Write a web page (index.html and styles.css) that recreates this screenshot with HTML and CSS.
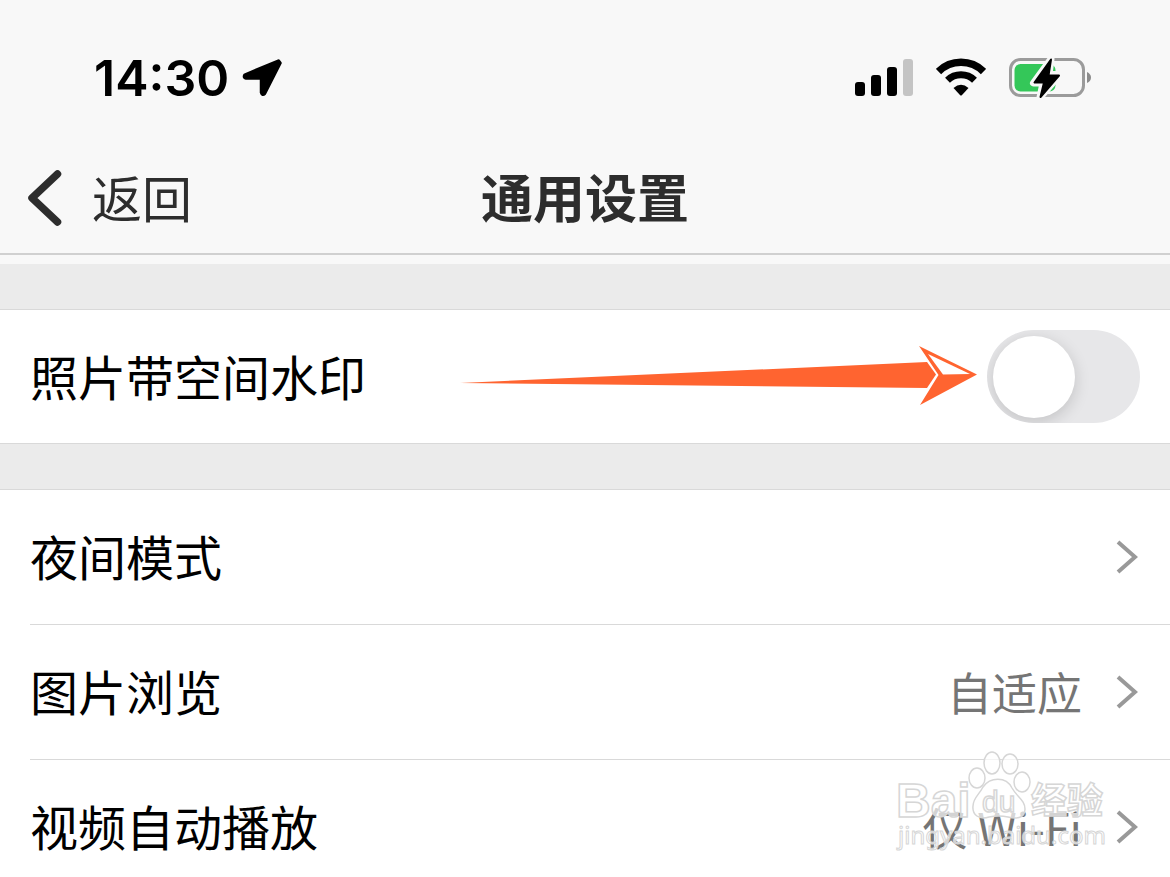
FILE: index.html
```
<!DOCTYPE html>
<html lang="zh-Hans">
<head>
  <meta charset="UTF-8" />
  <meta name="viewport" content="width=device-width, initial-scale=1" />
  <title>通用设置</title>
  <link rel="stylesheet" href="styles.css">
</head>
<body>
  <div class="screen">
    <header class="header">
      <div class="status-bar">
        <div class="status-left">
          <span class="time">14:30</span>
          <svg width="42" height="42" viewBox="0 0 42 42" aria-hidden="true">
            <path d="M37.500 4L4 18Q2.500 20.500 5 21H20.500V35.500Q21.500 38.500 23.500 36.500L39 6Z" stroke="#000" stroke-width="3.500" stroke-linejoin="round" />
          </svg>
        </div>
        <div class="status-right">
          <svg width="58" height="40" viewBox="0 0 58 40" aria-hidden="true">
            <rect x="0" y="24" width="10" height="14" rx="3" />
            <rect x="16" y="17" width="10" height="21" rx="3" />
            <rect x="32" y="9" width="10" height="29" rx="3" />
            <rect x="48" y="1" width="10" height="37" rx="3" fill="#c4c4c4" />
          </svg>
          <svg width="50" height="40" viewBox="0 0 50 40" aria-hidden="true">
            <path d="M2.500 13.500A32 32 0 0 1 47.500 13.500" fill="none" stroke="#000" stroke-width="7.500" />
            <path d="M11.500 22.200A19.500 19.500 0 0 1 38.500 22.200" fill="none" stroke="#000" stroke-width="7" />
            <path d="M17.500 30Q25 23.500 32.500 30L25.800 37.200Q25 38 24.200 37.200Z" />
          </svg>
          <svg width="83" height="44" viewBox="0 0 83 44" aria-hidden="true">
            <rect x="1.500" y="3.500" width="73" height="36" rx="10" fill="none" stroke="#9b9b9b" stroke-width="3" />
            <path d="M78 16Q82 18 82 21.500Q82 25 78 27Z" fill="#8c8c8c" />
            <rect x="5.500" y="8" width="41" height="27.500" rx="6" fill="#34c759" />
            <path d="M42 3L24.500 27H34L31 41.500L51 18.500H40Z" fill="#000" stroke="#f8f8f8" stroke-width="7" stroke-linejoin="round" />
            <path d="M42 3.500L25.500 26.500H35L31.500 41L50 19.500H39.500Z" stroke="#000" stroke-width="2" stroke-linejoin="round" />
          </svg>
        </div>
      </div>
      <nav class="nav-bar">
        <a class="back" href="#">
          <svg width="34" height="58" viewBox="0 0 34 58" aria-hidden="true">
            <path d="M29.500 5L4 29L29.500 53" fill="none" stroke="#2d2d2d" stroke-width="7.500" stroke-linecap="round" stroke-linejoin="round" />
          </svg>
          <span class="text">返回</span>
        </a>
        <h1 class="text">通用设置</h1>
      </nav>
    </header>

    <main>
      <section class="group">
        <div class="row">
          <label class="text" for="watermark">照片带空间水印</label>
          <svg class="pointer" width="520" height="64" viewBox="0 0 520 64" aria-hidden="true">
            <path d="M1 38L468 17L477 29.500L468 43Z" fill="#ff6430" />
            <path d="M460 1L518 29.500L461 60L479.500 30Z" fill="#ff6430" />
            <path d="M469 9L511 29L484 29.500Z" fill="#fff" />
          </svg>
          <input class="switch" type="checkbox" id="watermark" role="switch" />
        </div>
      </section>

      <section class="group">
        <a class="row" href="#">
          <span class="text">夜间模式</span>
          <svg class="chevron" width="22" height="34" viewBox="0 0 22 34" aria-hidden="true">
            <path d="M2 2L19 17L2 32" />
          </svg>
        </a>
        <a class="row" href="#">
          <span class="text">图片浏览</span>
          <span class="value">自适应</span>
          <svg class="chevron" width="22" height="34" viewBox="0 0 22 34" aria-hidden="true">
            <path d="M2 2L19 17L2 32" />
          </svg>
        </a>
        <a class="row" href="#">
          <span class="text">视频自动播放</span>
          <span class="value">仅 Wi-Fi</span>
          <svg class="chevron" width="22" height="34" viewBox="0 0 22 34" aria-hidden="true">
            <path d="M2 2L19 17L2 32" />
          </svg>
          <svg class="stamp" width="216" height="106" viewBox="0 0 216 106" aria-hidden="true">
            <text class="stamp-brand" x="2" y="67">Bai</text>
            <ellipse cx="83" cy="28" rx="8" ry="10" />
            <ellipse cx="98" cy="13" rx="8" ry="11" />
            <ellipse cx="116" cy="14" rx="8" ry="10" />
            <ellipse cx="128" cy="32" rx="8" ry="10" />
            <path d="M89 37C96 27 112 26 118 38C123 47 131 50 131 59C131 69 121 69 114 67Q105 65 95 67C85 70 78 65 79 56C79 48 85 45 89 37Z" />
            <text class="stamp-du" x="88" y="62">du</text>
            <text class="stamp-cn" x="137" y="64">经验</text>
            <text class="stamp-url" x="4" y="94">jingyan.baidu.com</text>
          </svg>
        </a>
      </section>
    </main>
  </div>
</body>
</html>
```
FILE: styles.css
```
* {
  box-sizing: border-box;
  margin: 0;
  padding: 0;
}

body {
  font-family: "Noto Sans CJK SC", sans-serif;
  background-color: #ebebeb;
  color: #000;
}

a {
  color: inherit;
  text-decoration: none;
}

svg {
  display: block;
  flex: none;
}

.screen {
  height: 100vh;
  overflow: hidden;
}

.header {
  background-color: #f8f8f8;
  padding-bottom: 9px;
}

.status-bar {
  display: flex;
  justify-content: space-between;
  align-items: center;
  height: 145px;
  padding: 11px 78px 0 94px;
}

.status-left {
  display: flex;
  align-items: center;
  gap: 12px;
}

.status-right {
  display: flex;
  align-items: center;
  gap: 23px;
}

.time {
  font-family: Inter, sans-serif;
  font-size: 50px;
  font-weight: 600;
  line-height: 60px;
}

.nav-bar {
  display: grid;
  grid-template-columns: 1fr auto 1fr;
  align-items: center;
  height: 110px;
  padding: 0 28px 2px;
  border-bottom: 2px solid #d0d0d0;
  color: #2d2d2d;
}

.text {
  padding-bottom: 4px;
}

.back {
  display: flex;
  align-items: center;
  gap: 30px;
  font-size: 50px;
  font-weight: 400;
  line-height: 60px;
}

h1 {
  font-size: 52px;
  font-weight: 700;
  line-height: 60px;
}

.group {
  margin-top: 45px;
  border-top: 1px solid #d9d9d9;
  border-bottom: 1px solid #d9d9d9;
  background-color: #fff;
}

.row {
  position: relative;
  display: flex;
  align-items: center;
  height: 135px;
  padding-right: 30px;
  margin-left: 30px;
  border-bottom: 1px solid #d9d9d9;
  font-size: 48px;
  font-weight: 400;
  line-height: 60px;
}

.row:last-child {
  height: 133px;
  border-bottom: none;
}

.pointer {
  margin-left: auto;
  margin-right: 8px;
}

.switch {
  appearance: none;
  display: flex;
  align-items: center;
  width: 153px;
  height: 93px;
  padding: 0 6px;
  border-radius: 47px;
  background-color: #e7e7e9;
  overflow: hidden;
  cursor: pointer;
}

.switch::before {
  content: "";
  width: 82px;
  height: 82px;
  border-radius: 50%;
  background-color: #fff;
  box-shadow: 0 4px 16px rgba(0, 0, 0, 0.16);
}

.switch:checked {
  justify-content: flex-end;
  background-color: #34c759;
}

.value {
  margin-left: auto;
  margin-right: 34px;
  color: #757575;
  font-size: 45px;
  font-weight: 400;
}

.chevron {
  margin-left: auto;
  margin-right: 2px;
  fill: none;
  stroke: #999;
  stroke-width: 4;
}

.value + .chevron {
  margin-left: 0;
}

/* logo stamp over the last row */
.stamp {
  position: absolute;
  right: 60px;
  top: -10px;
  fill: rgba(255, 255, 255, 0.7);
  stroke: #d6d6d6;
  stroke-width: 1.5;
  pointer-events: none;
}

.stamp-brand {
  font: 700 48px "Liberation Sans", sans-serif;
}

.stamp-du {
  font: 400 30px "Liberation Sans", sans-serif;
}

.stamp-cn {
  font: 700 36px "Noto Sans CJK SC", sans-serif;
}

.stamp-url {
  font: 400 24px "Noto Sans", sans-serif;
  stroke-width: 1;
}
```
